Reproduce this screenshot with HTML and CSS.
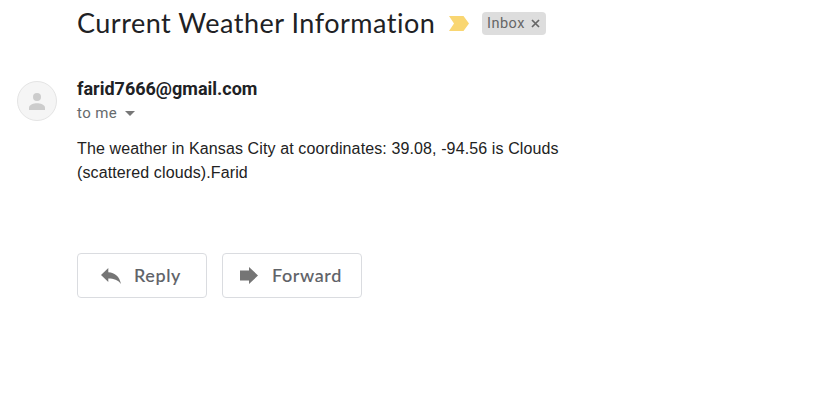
FILE: index.html
```html
<!DOCTYPE html>
<html lang="en">
<head>
<meta charset="utf-8">
<title>Current Weather Information</title>
<link rel="stylesheet" href="styles.css">
</head>
<body>
<main class="mail">
  <header class="subject">
    <h1 class="title">Current Weather Information</h1>
    <svg class="marker" width="20" height="15" viewBox="0 0 20 15"><path d="M0 0h14.500L20 7.500 14.500 15H0l5-7.500z" fill="#f9d672"/></svg>
    <span class="label">Inbox<svg class="close" width="9" height="9" viewBox="0 0 9 9"><path d="M1 1l7 7M8 1L1 8" stroke="#666" stroke-width="1.700"/></svg></span>
  </header>
  <section class="message">
    <div class="avatar"><svg width="16" height="17" viewBox="0 0 16 17"><circle cx="8" cy="4" r="4" fill="#ccc"/><path d="M0 17v-2.500C0 11.700 5 10.200 8 10.200s8 1.500 8 4.300V17z" fill="#ccc"/></svg></div>
    <div class="content">
      <div class="sender">farid7666@gmail.com</div>
      <div class="to"><span>to me</span><svg width="10" height="5" viewBox="0 0 10 5"><path d="M0 0h10L5 5z" fill="#777"/></svg></div>
      <p class="body">The weather in Kansas City at coordinates: 39.08, -94.56 is Clouds<br>(scattered clouds).Farid</p>
      <div class="actions">
        <button class="button reply"><svg width="20" height="16" viewBox="0 0 20 16"><path d="M0 7L7.300 0v4.200C14 4.500 18.500 8.500 20 16c-3.200-4-7-5.400-12.700-5.400V14z" fill="#757575"/></svg><span>Reply</span></button>
        <button class="button forward"><svg width="18" height="17" viewBox="0 0 18 17"><path d="M0 3.500h9V0l9 8.500L9 17v-3.500H0z" fill="#757575"/></svg><span>Forward</span></button>
      </div>
    </div>
  </section>
</main>
</body>
</html>
```
FILE: styles.css
```css
* { box-sizing: border-box; }
body { margin: 0; background: #fff; color: #202124; font-family: Roboto, sans-serif; }
.subject { display: flex; align-items: center; height: 47px; padding-left: 77px; }
.title { width: 358px; margin: 0; padding-bottom: 2px; font: 400 27px/36px Lato, sans-serif; letter-spacing: .5px; font-variant-ligatures: none; white-space: nowrap; }
.marker { margin-left: 14px; }
.label { display: flex; align-items: center; width: 64px; height: 23px; margin-left: 13px; padding: 0 0 1px 5px; border-radius: 4px; background: #ddd; color: #666; font-size: 14.5px; letter-spacing: .5px; }
.close { margin: 1px 0 0 6px; }
.message { display: flex; padding: 31px 0 0 17px; }
.avatar { display: flex; align-items: center; justify-content: center; width: 40px; height: 40px; margin: 3px 20px 0 0; border: 1px solid #e4e4e4; border-radius: 50%; background: #f5f5f5; }
.sender { font-size: 18px; font-weight: 700; line-height: 22px; }
.to { display: flex; align-items: center; gap: 8px; height: 24px; margin-top: 1px; color: #666a6d; font-size: 15px; letter-spacing: .4px; }
.body { margin: 12px 0 0; color: #222; font: 16px/24px "Liberation Sans", Arial, sans-serif; letter-spacing: .115px; white-space: nowrap; }
.actions { display: flex; gap: 15px; margin-top: 68px; }
.button { display: flex; align-items: center; height: 45px; padding: 0; border: 1px solid #dadce0; border-radius: 4px; background: #fff; color: #5f6368; font: 500 18px/24px Lato, sans-serif; letter-spacing: .6px; -webkit-text-stroke: .1px #5f6368; }
.button span { padding-bottom: 2px; }
.reply { width: 130px; padding-left: 23px; }
.reply span { margin-left: 13px; }
.forward { width: 140px; padding-left: 17px; }
.forward span { margin-left: 14px; }
```
